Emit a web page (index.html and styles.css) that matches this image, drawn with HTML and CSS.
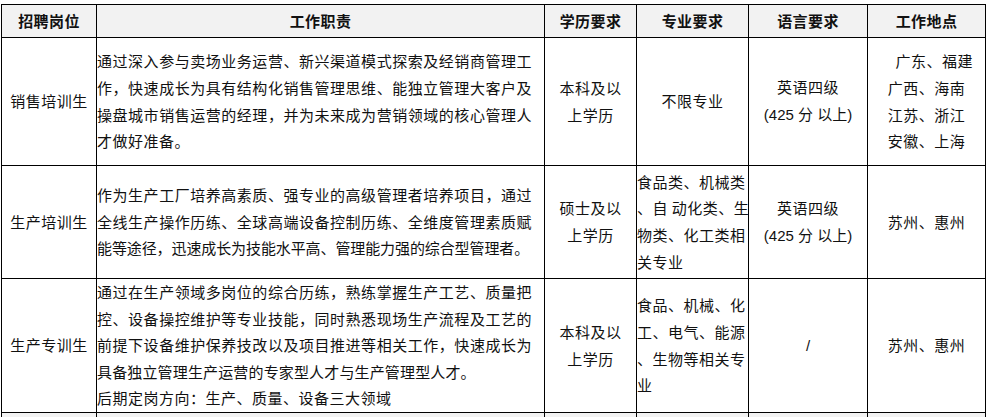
FILE: index.html
```html
<!DOCTYPE html>
<html lang="zh-CN">
<head>
<meta charset="utf-8">
<title>招聘岗位</title>
<link rel="stylesheet" href="styles.css">
</head>
<body>
<table class="jobs">
  <colgroup>
    <col class="c-post">
    <col class="c-duty">
    <col class="c-edu">
    <col class="c-major">
    <col class="c-lang">
    <col class="c-loc">
  </colgroup>
  <thead>
    <tr class="head">
      <th>招聘岗位</th>
      <th>工作职责</th>
      <th>学历要求</th>
      <th>专业要求</th>
      <th>语言要求</th>
      <th>工作地点</th>
    </tr>
  </thead>
  <tbody>
    <tr class="r1">
      <td class="post">销售培训生</td>
      <td class="duty">
        <span class="ln j">通过深入参与卖场业务运营、新兴渠道模式探索及经销商管理工</span>
        <span class="ln j">作，快速成长为具有结构化销售管理思维、能独立管理大客户及</span>
        <span class="ln j">操盘城市销售运营的经理，并为未来成为营销领域的核心管理人</span>
        <span class="ln">才做好准备。</span>
      </td>
      <td class="mid">本科及以<br>上学历</td>
      <td class="mid">不限专业</td>
      <td class="mid">英语四级<br><span class="num">(425 分 以上)</span></td>
      <td class="mid">　广东、福建<br>广西、海南<br>江苏、浙江<br>安徽、上海</td>
    </tr>
    <tr class="r2">
      <td class="post">生产培训生</td>
      <td class="duty">
        <span class="ln j">作为生产工厂培养高素质、强专业的高级管理者培养项目，通过</span>
        <span class="ln j">全线生产操作历练、全球高端设备控制历练、全维度管理素质赋</span>
        <span class="ln tight">能等途径，迅速成长为技能水平高、管理能力强的综合型管理者。</span>
      </td>
      <td class="mid">硕士及以<br>上学历</td>
      <td class="major">
        <span class="ln j">食品类、机械类</span>
        <span class="ln j">、自 动化类、生</span>
        <span class="ln j">物类、化工类相</span>
        <span class="ln">关专业</span>
      </td>
      <td class="mid">英语四级<br><span class="num">(425 分 以上)</span></td>
      <td class="mid">苏州、惠州</td>
    </tr>
    <tr class="r3">
      <td class="post">生产专训生</td>
      <td class="duty">
        <span class="ln j">通过在生产领域多岗位的综合历练，熟练掌握生产工艺、质量把</span>
        <span class="ln j">控、设备操控维护等专业技能，同时熟悉现场生产流程及工艺的</span>
        <span class="ln j">前提下设备维护保养技改以及项目推进等相关工作，快速成长为</span>
        <span class="ln semi">具备独立管理生产运营的专家型人才与生产管理型人才。</span>
        <span class="ln">后期定岗方向：生产、质量、设备三大领域</span>
      </td>
      <td class="mid">本科及以<br>上学历</td>
      <td class="major">
        <span class="ln j">食品、机械、化</span>
        <span class="ln j">工、电气、能源</span>
        <span class="ln j">、生物等相关专</span>
        <span class="ln">业</span>
      </td>
      <td class="mid"><span class="num">/</span></td>
      <td class="mid">苏州、惠州</td>
    </tr>
    <tr class="tail">
      <td></td><td></td><td></td><td></td><td></td><td></td>
    </tr>
  </tbody>
</table>
</body>
</html>
```

FILE: styles.css
```css
html, body {
  margin: 0;
  padding: 0;
  background: #ffffff;
  overflow: hidden;
}

body {
  padding: 4px 0 0 1px;
  font-family: "Noto Sans CJK SC", "Noto Sans", sans-serif;
  color: #111111;
}

.jobs {
  border-collapse: collapse;
  table-layout: fixed;
  width: 984px;
}

.c-post { width: 95px; }
.c-duty { width: 448px; }
.c-edu { width: 92px; }
.c-major { width: 112px; }
.c-lang { width: 119px; }
.c-loc { width: 118px; }

.jobs th,
.jobs td {
  border: 1px solid #000000;
  padding: 0;
  vertical-align: middle;
}

.head th {
  height: 32px;
  background: #f2f2f2;
  font-size: 15px;
  font-weight: bold;
  letter-spacing: 0.4px;
  line-height: 20px;
  text-align: center;
  color: #111111;
}

.jobs td {
  font-size: 15px;
  letter-spacing: 0.5px;
  line-height: 26.6px;
}

.r1 td { height: 127px; }
.r2 td { height: 112px; }
.r3 td { height: 133px; }

.post {
  text-align: center;
}

.mid {
  text-align: center;
}

.duty {
  padding: 0 12px 0 0 !important;
  text-align: left;
}

.major {
  padding: 0 3px 0 0 !important;
  text-align: left;
}

.ln {
  display: block;
  white-space: nowrap;
}

.ln.j {
  text-align: justify;
  text-align-last: justify;
}

.ln.tight {
  letter-spacing: -0.1px;
}

.ln.semi {
  letter-spacing: 0.15px;
}

.num {
  font-family: "Liberation Sans", "Noto Sans CJK SC", sans-serif;
  letter-spacing: 0;
}

.tail td {
  height: 30px;
  background: #f2f2f2;
}
```
